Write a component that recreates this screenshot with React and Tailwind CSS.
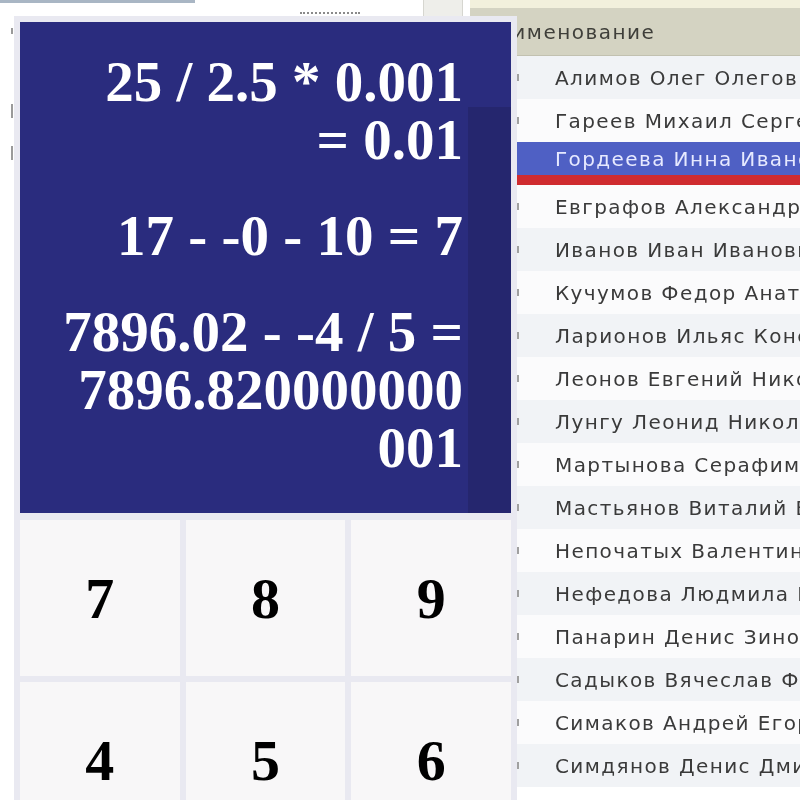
import React from "react";

const people = [
  "Алимов Олег Олегович",
  "Гареев Михаил Сергеевич",
  "Гордеева Инна Ивановна",
  "Евграфов Александр Петрович",
  "Иванов Иван Иванович",
  "Кучумов Федор Анатольевич",
  "Ларионов Ильяс Константинович",
  "Леонов Евгений Николаевич",
  "Лунгу Леонид Николаевич",
  "Мартынова Серафима Ивановна",
  "Мастьянов Виталий Борисович",
  "Непочатых Валентин Сергеевич",
  "Нефедова Людмила Петровна",
  "Панарин Денис Зиновьевич",
  "Садыков Вячеслав Федорович",
  "Симаков Андрей Егорович",
  "Симдянов Денис Дмитриевич",
];

const history = [
  ["25 / 2.5 * 0.001", "= 0.01"],
  ["17 - -0 - 10 = 7"],
  ["7896.02 - -4 / 5 =", "7896.820000000", "001"],
];

const keys = ["7", "8", "9", "4", "5", "6"];

const App = () => {
  return (
    <div className="relative w-[800px] h-[800px] overflow-hidden bg-white">
      {/* Background list window */}
      <div className="flex h-full blur-[0.4px]">
        <div className="w-[470px] shrink-0 flex flex-col">
          <div className="flex h-[16px]">
            <div className="w-[195px] h-[3px] bg-[#a9b6c4]" />
            <div className="w-[105px]" />
            <div className="w-[60px] mt-[12px] h-[4px] border-t-2 border-dotted border-[#8a8a8a]" />
            <div className="w-[63px]" />
            <div className="w-[40px] h-[16px] bg-[#eeeeea] border-x border-[#d6d6d0]" />
          </div>
          <div className="flex flex-col items-start pl-[11px] pt-[12px] gap-[70px]">
            <div className="w-[2px] h-[6px] bg-[#9a9a9a]" />
            <div className="w-[2px] h-[14px] bg-[#9a9a9a]" />
          </div>
          <div className="flex flex-col items-start pl-[11px] pt-[28px]">
            <div className="w-[2px] h-[14px] bg-[#9a9a9a]" />
          </div>
        </div>
        <div className="flex-1 min-w-0 flex flex-col">
          <div className="h-[8px] bg-[#f2f0dc]" />
          <div className="h-[48px] bg-[#d4d3c2] border-b border-[#c2c1b0] flex items-center pl-[12px] font-['DejaVu_Sans',sans-serif] text-[20px] tracking-[1.5px] text-[#3f3f3a]">
            Наименование
          </div>
          {people.map((name, i) => {
            const selected = i === 2;
            return (
              <div
                key={name}
                className={
                  selected
                    ? "h-[43px] flex flex-col"
                    : i % 2 === 0
                    ? "h-[43px] flex items-center bg-[#f1f3f6]"
                    : "h-[43px] flex items-center bg-[#fbfbfc]"
                }
              >
                {selected ? (
                  <>
                    <div className="h-[33px] bg-[#4f60c4] flex items-center">
                      <div className="w-[85px] shrink-0" />
                      <span className="whitespace-nowrap font-['DejaVu_Sans',sans-serif] text-[20px] tracking-[1.4px] text-[#e6e9ff]">
                        {name}
                      </span>
                    </div>
                    <div className="h-[10px] bg-[#cf2b2f]" />
                  </>
                ) : (
                  <>
                    <div className="w-[85px] shrink-0 flex justify-start pl-[47px]">
                      <div className="w-[2px] h-[7px] bg-[#a0a0a0]" />
                    </div>
                    <span className="whitespace-nowrap font-['DejaVu_Sans',sans-serif] text-[20px] tracking-[1.4px] text-[#3a3a3a]">
                      {name}
                    </span>
                  </>
                )}
              </div>
            );
          })}
        </div>
      </div>

      {/* Calculator overlay */}
      <div className="absolute left-[14px] top-[16px] w-[503px] bg-[#e9e9f1] p-[6px] flex flex-col gap-[7px]">
        <div className="h-[491px] bg-[#2a2c7e] flex">
          <div className="flex-1 pt-[31px] pr-[5px] flex flex-col gap-[38px] text-right text-white font-['Liberation_Serif',serif] font-bold text-[57px] leading-[58px]">
            {history.map((lines, i) => (
              <div key={i}>
                {lines.map((line) => (
                  <div key={line} className="whitespace-nowrap">
                    {line}
                  </div>
                ))}
              </div>
            ))}
          </div>
          <div className="w-[43px] flex flex-col">
            <div className="h-[85px]" />
            <div className="flex-1 bg-[#25266e]" />
          </div>
        </div>
        <div className="grid grid-cols-3 gap-[6px]">
          {keys.map((k) => (
            <div
              key={k}
              className="h-[156px] bg-[#f8f7f8] flex items-center justify-center font-['Liberation_Serif',serif] font-bold text-[58px] text-black"
            >
              {k}
            </div>
          ))}
        </div>
      </div>
    </div>
  );
};

export default App;
